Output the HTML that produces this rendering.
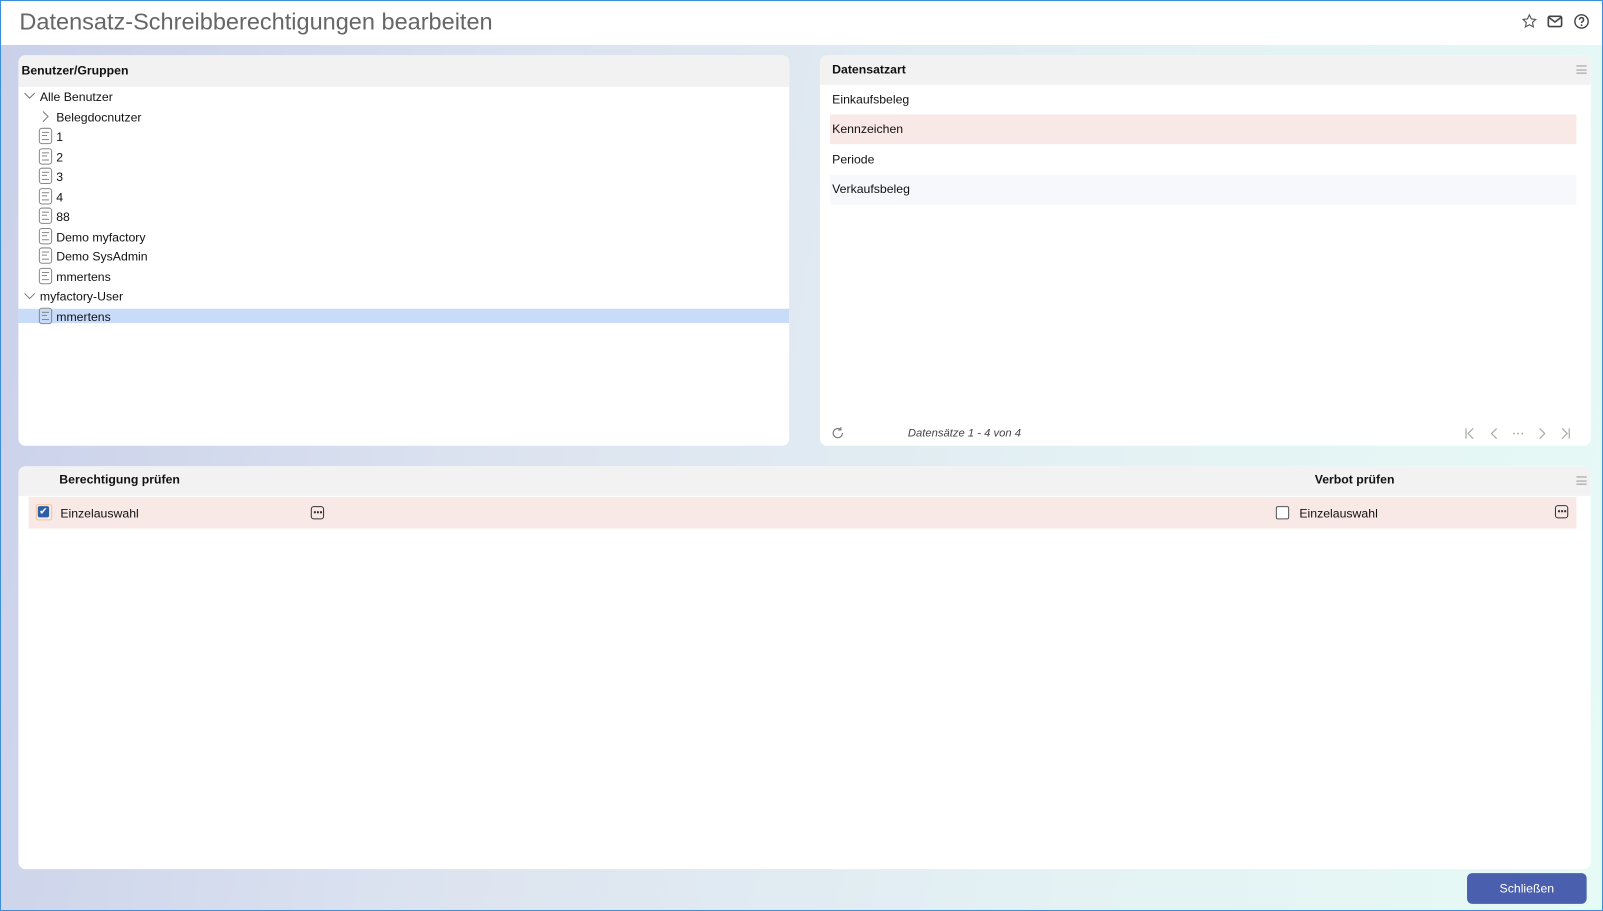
<!DOCTYPE html><html><head><style>
*{box-sizing:border-box;margin:0;padding:0}
html,body{width:1603px;height:911px;overflow:hidden}
#w{width:1568px;height:891px;transform:scale(1.02232,1.02245);transform-origin:0 0;font-family:"Liberation Sans",sans-serif;font-size:12px;color:#111;position:relative;border:1px solid #3a8fdc;background:linear-gradient(100deg,#c9d0ea 0%,#dde4f0 35%,#e4f2f4 70%,#e6faf6 100%)}
.top{position:absolute;left:0;top:0;width:1566px;height:43px;background:#fff}
.title{position:absolute;left:18px;top:7px;font-size:23px;color:#666}
.panel{position:absolute;background:#fff;border-radius:7px;overflow:hidden}
.hdr{background:#f2f2f2;height:30px;font-weight:bold;line-height:30px;padding-left:3px}
.t{position:absolute;white-space:nowrap}
.doc{position:absolute;width:13px;height:16px;border:1.3px solid #888;border-radius:3px}
.doc:before{content:"";position:absolute;left:2px;top:3px;width:7px;height:6px;border-top:1px solid #888;border-bottom:1px solid #888}
.doc:after{content:"";position:absolute;left:2px;top:6px;width:5px;border-top:1px solid #888}
.row{position:absolute;left:10px;width:730px;height:29px;line-height:29px;padding-left:2px}
.menu{position:absolute;right:4px;top:10px;width:10px;height:8px;border-top:1px solid #999;border-bottom:1px solid #999}
.menu:after{content:"";position:absolute;left:0;top:3px;width:10px;border-top:1px solid #999}
.dots{position:absolute;width:13px;height:13px;border:1.5px solid #333;border-radius:3px}
.dots:after{content:"";position:absolute;left:2px;top:4px;width:2px;height:2px;background:#333;box-shadow:3px 0 #333,6px 0 #333}
</style></head><body><div id="w">
<div class="top"><div class="title">Datensatz-Schreibberechtigungen bearbeiten</div>
<svg style="position:absolute;left:1487px;top:12px" width="16" height="16" viewBox="0 0 16 16"><path d="M8 1.5l1.9 4 4.3.5-3.2 3 .9 4.3L8 11.2 4.1 13.3 5 9 1.8 6l4.3-.5z" fill="none" stroke="#555" stroke-width="1.1"/></svg>
<svg style="position:absolute;left:1512px;top:12px" width="16" height="16" viewBox="0 0 16 16"><rect x="1.5" y="3" width="13" height="10" rx="1.5" fill="none" stroke="#444" stroke-width="1.6"/><path d="M2 4l6 4.5L14 4" fill="none" stroke="#444" stroke-width="1.6"/></svg>
<svg style="position:absolute;left:1538px;top:12px" width="16" height="16" viewBox="0 0 16 16"><circle cx="8" cy="8" r="6.5" fill="none" stroke="#444" stroke-width="1.4"/><path d="M6 6.3a2 2 0 1 1 2.8 1.8c-.6.3-.8.7-.8 1.4" fill="none" stroke="#444" stroke-width="1.4"/><circle cx="8" cy="11.6" r=".9" fill="#444"/></svg>
</div>

<div class="panel" style="left:17px;top:53px;width:754px;height:382px">
<div class="hdr" style="height:31px;line-height:31px">Benutzer/Gruppen</div>
<svg class="t" style="left:5px;top:36px" width="12" height="8"><path d="M1 1l5 5 5-5" fill="none" stroke="#777"/></svg>
<div class="t" style="left:21px;top:34px">Alle Benutzer</div>
<svg class="t" style="left:23px;top:54px" width="8" height="12"><path d="M1 1l5 5-5 5" fill="none" stroke="#777"/></svg>
<div class="t" style="left:37px;top:54px">Belegdocnutzer</div>
<div style="position:absolute;left:0;top:248px;width:754px;height:14px;background:#c8dbf8"></div>
<div class="doc" style="left:20px;top:71px"></div><div class="t" style="left:37px;top:73px">1</div>
<div class="doc" style="left:20px;top:91px"></div><div class="t" style="left:37px;top:93px">2</div>
<div class="doc" style="left:20px;top:110px"></div><div class="t" style="left:37px;top:112px">3</div>
<div class="doc" style="left:20px;top:130px"></div><div class="t" style="left:37px;top:132px">4</div>
<div class="doc" style="left:20px;top:149px"></div><div class="t" style="left:37px;top:151px">88</div>
<div class="doc" style="left:20px;top:169px"></div><div class="t" style="left:37px;top:171px">Demo myfactory</div>
<div class="doc" style="left:20px;top:188px"></div><div class="t" style="left:37px;top:190px">Demo SysAdmin</div>
<div class="doc" style="left:20px;top:208px"></div><div class="t" style="left:37px;top:210px">mmertens</div>
<svg class="t" style="left:5px;top:232px" width="12" height="8"><path d="M1 1l5 5 5-5" fill="none" stroke="#777"/></svg>
<div class="t" style="left:21px;top:229px">myfactory-User</div>
<div class="doc" style="left:20px;top:247px"></div><div class="t" style="left:37px;top:249px">mmertens</div>
</div>

<div class="panel" style="left:801px;top:53px;width:754px;height:382px">
<div class="hdr" style="height:29px;line-height:29px;padding-left:12px">Datensatzart<div class="menu"></div></div>
<div class="row" style="top:29px">Einkaufsbeleg</div>
<div class="row" style="top:58px;background:#f8e8e6">Kennzeichen</div>
<div class="row" style="top:88px">Periode</div>
<div class="row" style="top:117px;background:#f7f8fc">Verkaufsbeleg</div>
<svg class="t" style="left:11px;top:363px" width="13" height="13" viewBox="0 0 13 13"><path d="M11 6.5A4.5 4.5 0 1 1 9.2 3" fill="none" stroke="#777" stroke-width="1.1"/><path d="M9.5 .8v2.7H6.8" fill="none" stroke="#777" stroke-width="1.1"/></svg>
<div class="t" style="left:86px;top:364px;font-size:11px;font-style:italic;color:#444">Datensätze 1 - 4 von 4</div>
<svg class="t" style="left:630px;top:364px" width="105" height="12" viewBox="0 0 105 12"><g fill="none" stroke="#aaa" stroke-width="1.2"><path d="M2 1v10M9 1L4 6l5 5"/><path d="M32 1L27 6l5 5"/><path d="M74 1l5 5-5 5"/><path d="M96 1l5 5-5 5M103 1v10"/></g><g fill="#aaa"><circle cx="49" cy="6" r=".9"/><circle cx="53" cy="6" r=".9"/><circle cx="57" cy="6" r=".9"/></g></svg>
</div>

<div class="panel" style="left:17px;top:455px;width:1538px;height:394px">
<div class="hdr" style="height:29px;line-height:27px"><span style="position:absolute;left:40px">Berechtigung prüfen</span><span style="position:absolute;left:1268px">Verbot prüfen</span><div class="menu"></div></div>
<div style="position:absolute;left:10px;top:30px;width:1514px;height:31px;background:#f8e8e6"></div>
<div style="position:absolute;left:17px;top:37px;width:16px;height:16px;border:1.5px solid #f5c99a;border-radius:2px;padding:1px"><div style="width:11px;height:11px;background:#2d5eab;border-radius:2px;color:#fff;font-size:10px;line-height:11px;text-align:center">✔</div></div>
<div class="t" style="left:41px;top:39px">Einzelauswahl</div>
<div class="dots" style="left:286px;top:39px"></div>
<div style="position:absolute;left:1230px;top:39px;width:13px;height:13px;border:1px solid #555;border-radius:2px;background:#fff"></div>
<div class="t" style="left:1253px;top:39px">Einzelauswahl</div>
<div class="dots" style="left:1503px;top:38px"></div>
</div>

<div style="position:absolute;left:1434px;top:853px;width:117px;height:30px;background:#4a5fae;border-radius:5px;color:#fff;text-align:center;line-height:30px;font-size:12px">Schließen</div>
</div></body></html>
